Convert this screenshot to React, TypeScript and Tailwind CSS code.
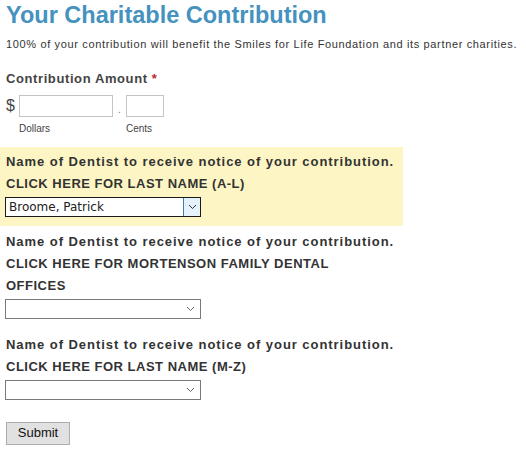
import React from 'react'

const LABEL = 'text-[13px] font-bold text-[#333] leading-[22px]'

function Chevron({ className }: { className?: string }) {
  return (
    <svg width="9" height="6" viewBox="0 0 9 6" className={className}>
      <path d="M1 1 L4.5 4.5 L8 1" fill="none" stroke="currentColor" strokeWidth="1" />
    </svg>
  )
}

function DentistSelect({ value, active }: { value?: string; active?: boolean }) {
  if (active) {
    return (
      <div className="flex w-[196px] h-[20px] border border-[#1a1a1a] bg-white">
        <div className="flex-1 pl-[3px] text-[12px] leading-[18px] text-[#222] font-['DejaVu_Sans',sans-serif]">
          {value}
        </div>
        <div className="w-[17px] flex items-center justify-center bg-[#e5f1fb] border-l border-[#3c7fb1] text-[#333]">
          <Chevron />
        </div>
      </div>
    )
  }
  return (
    <div className="flex items-center justify-end w-[196px] h-[20px] border border-[#7a7a7a] bg-white pr-[5px] text-[#666]">
      <Chevron />
    </div>
  )
}

function DentistField({ lines, value, active }: { lines: string[]; value?: string; active?: boolean }) {
  return (
    <div className={`w-[403px] pl-[5px] ${active ? 'bg-[#fdf6c4] pt-[4px] pb-[9px]' : ''}`}>
      <div className={`${LABEL} pl-[1px]`}>
        <div className="tracking-[0.95px] whitespace-nowrap">Name of Dentist to receive notice of your contribution.</div>
        {lines.map((l) => (
          <div key={l} className="tracking-[0.5px] whitespace-nowrap">{l}</div>
        ))}
      </div>
      <div className="mt-[2px]">
        <DentistSelect value={value} active={active} />
      </div>
    </div>
  )
}

export default function App() {
  return (
    <div className="w-[526px] h-[451px] bg-white font-['Liberation_Sans',Arial,sans-serif] text-[#333] overflow-hidden">
      <h1 className="pl-[6px] pt-[1px] text-[23.5px] leading-[28px] font-bold text-[#4592bf]">
        Your Charitable Contribution
      </h1>
      <p className="pl-[6px] mt-[8px] text-[11px] leading-[14px] text-[#333] tracking-[0.65px] whitespace-nowrap">
        100% of your contribution will benefit the Smiles for Life Foundation and its partner charities.
      </p>

      <div className="pl-[6px] mt-[20px]">
        <div className="text-[13px] font-bold leading-[16px] text-[#444] tracking-[0.6px]">
          Contribution Amount <span className="text-[#c0272d]">*</span>
        </div>
        <div className="flex items-start mt-[8px]">
          <span className="w-[13px] text-[16px] leading-[22px] text-[#444]">$</span>
          <div className="flex flex-col">
            <div className="w-[94px] h-[22px] border border-[#c4c4c4] bg-white" />
            <span className="mt-[5px] text-[10px] leading-[14px] text-[#444]">Dollars</span>
          </div>
          <span className="w-[13px] text-center text-[10px] leading-[30px] text-[#777]">.</span>
          <div className="flex flex-col">
            <div className="w-[38px] h-[22px] border border-[#c4c4c4] bg-white" />
            <span className="mt-[5px] text-[10px] leading-[14px] text-[#444]">Cents</span>
          </div>
        </div>
      </div>

      <div className="mt-[11px] flex flex-col">
        <DentistField lines={['CLICK HERE FOR LAST NAME (A-L)']} value="Broome, Patrick" active />
        <div className="mt-[5px]">
          <DentistField lines={['CLICK HERE FOR MORTENSON FAMILY DENTAL', 'OFFICES']} />
        </div>
        <div className="mt-[15px]">
          <DentistField lines={['CLICK HERE FOR LAST NAME (M-Z)']} />
        </div>
      </div>

      <div className="pl-[6px] mt-[20px]">
        <button className="w-[64px] h-[23px] bg-[#e1e1e1] border border-[#adadad] text-[13px] text-[#111] leading-[20px]">
          Submit
        </button>
      </div>
    </div>
  )
}
